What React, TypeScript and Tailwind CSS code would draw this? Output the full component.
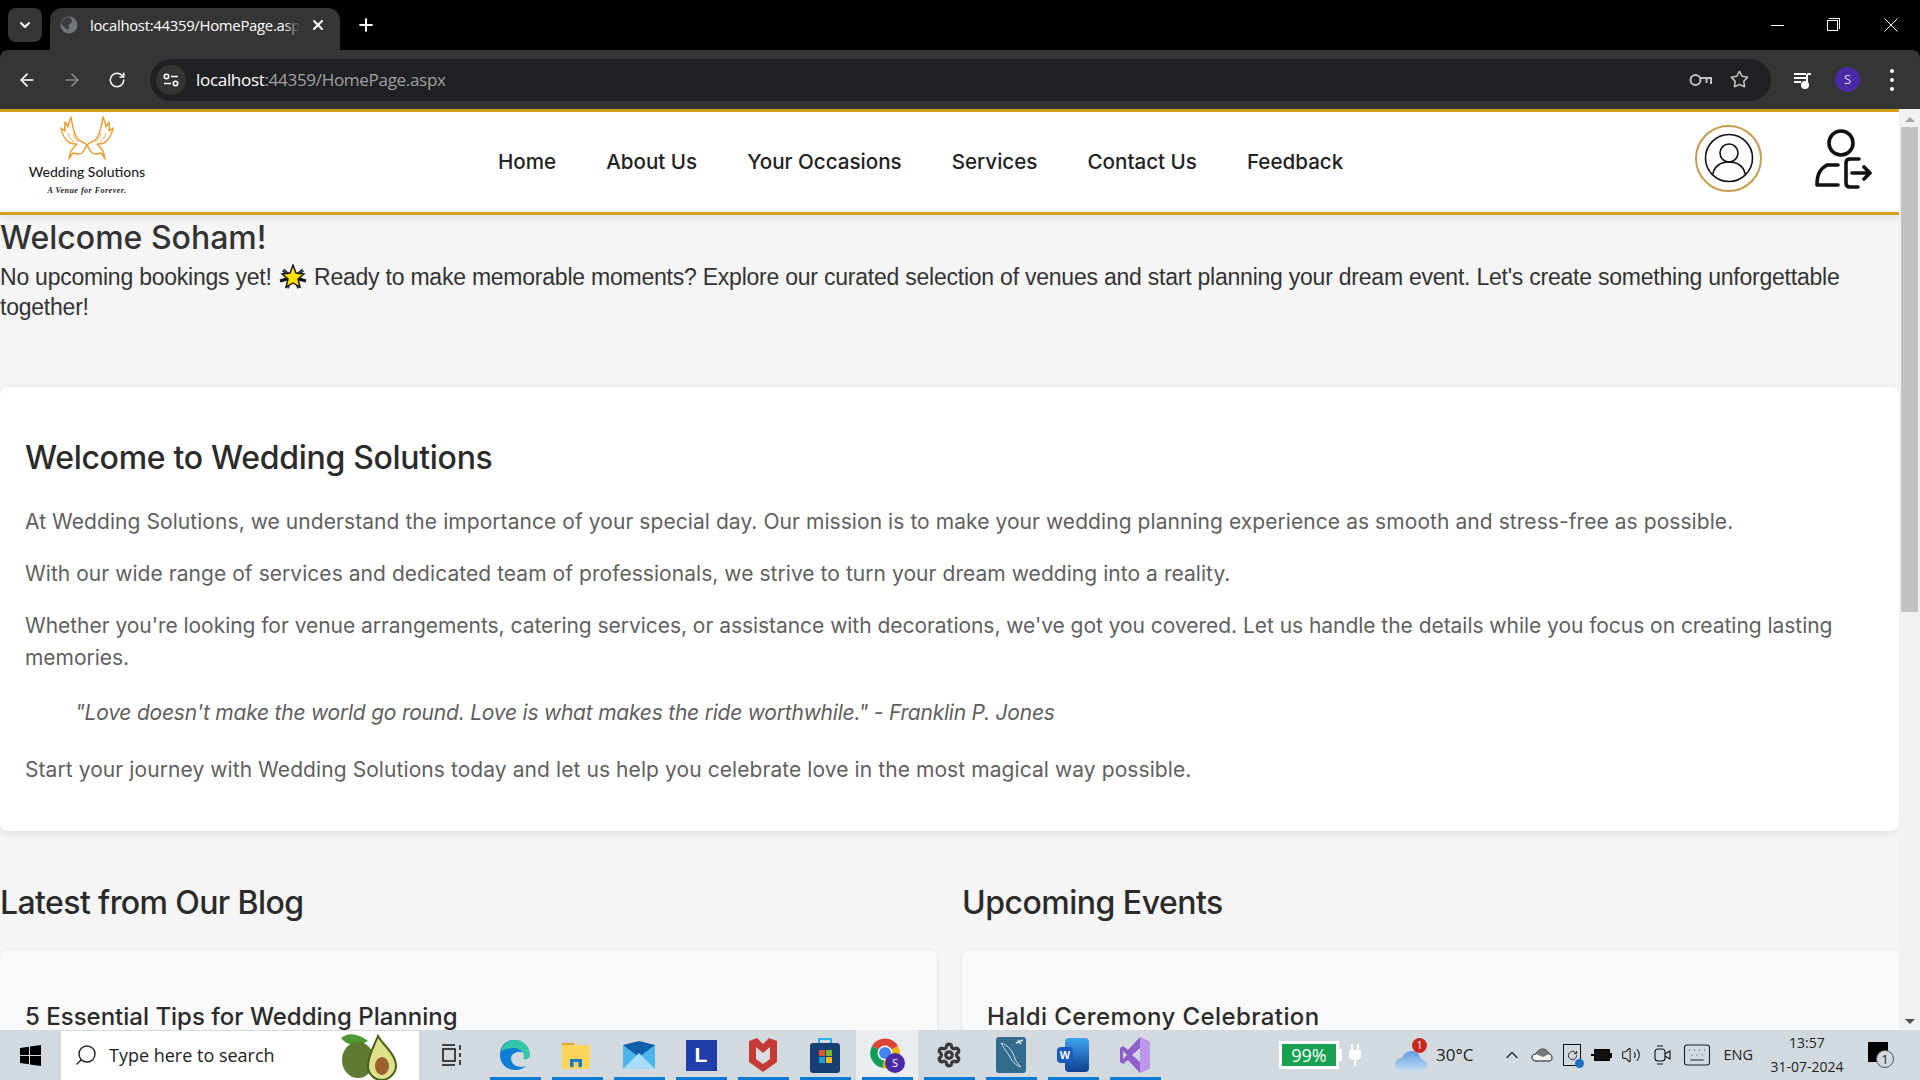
import {
  ArrowLeft,
  ArrowRight,
  RotateCw,
  Star,
  X,
  Plus,
  ChevronDown,
  ChevronUp,
  Search,
  Volume2,
  Settings,
  Keyboard,
} from "lucide-react";

const navLinks = ["Home", "About Us", "Your Occasions", "Services", "Contact Us", "Feedback"];

const columns = [
  {
    heading: "Latest from Our Blog",
    headingClass: "tracking-[-0.6px]",
    title: "5 Essential Tips for Wedding Planning",
    titleClass: "tracking-[0px]",
  },
  {
    heading: "Upcoming Events",
    headingClass: "tracking-[-0.5px]",
    title: "Haldi Ceremony Celebration",
    titleClass: "tracking-[0.4px]",
  },
];

function Dove({ flip }: { flip?: boolean }) {
  return (
    <g transform={flip ? "translate(60 0) scale(-1 1)" : undefined}>
      <path d="M30 29 C27 26 24 26 22 24 C18 21 16 14 14 1 C12 5 11.5 8 11 11 C10 9 9 7 8 6 C7.5 10 7.5 12 8 15 C6.5 14 5.5 13 4 12 C5 18 8 24 13 27 C15 28 18 28 20 28" />
      <path d="M30 29 C28 32 27 35 25 37 C22 39 19 38 16 37 C14 39 13 41 12 43 C13 40 13 37 14 35 C16 32 18 30 20 28" />
      <path d="M16 17 C17 21 19 24 22 26 M11 17 C12 21 14 24 17 26" strokeWidth="0.8" />
    </g>
  );
}

function Logo() {
  return (
    <div className="flex h-[97px] w-[122px] flex-col items-center pt-[2px]">
      <svg width="60" height="46" viewBox="0 0 60 46" fill="none" stroke="#f29b2a" strokeWidth="1.5" strokeLinejoin="round">
        <Dove />
        <Dove flip />
      </svg>
      <div className="mt-[2px] font-['Lato',sans-serif] text-[14px] leading-4 font-medium whitespace-nowrap text-[#1d1d1d]">
        Wedding Solutions
      </div>
      <div className="mt-[6px] font-['Liberation_Serif',serif] text-[8px] leading-[9px] font-bold tracking-[0.5px] whitespace-nowrap text-[#222] italic">
        A Venue for Forever.
      </div>
    </div>
  );
}

function StarEmoji() {
  return (
    <svg width="28" height="26" viewBox="0 0 28 26" className="mx-[1px] inline-block align-[-5px]">
      <path d="M4 6 L10 11 M24 6 L18 11 M1 17 L8 15 M27 17 L20 15 M8 24 L11 18 M20 24 L17 18" stroke="#111" strokeWidth="3" />
      <path d="M4 6 L10 11 M24 6 L18 11 M8 24 L11 18 M20 24 L17 18" stroke="#2aa7d8" strokeWidth="1" />
      <path d="M14 1 L17 9 L25 10 L19 15 L21 23 L14 19 L7 23 L9 15 L3 10 L11 9 Z" fill="#ffdf00" stroke="#111" strokeWidth="1.4" />
    </svg>
  );
}

function Avocado() {
  return (
    <svg width="60" height="50" viewBox="0 0 60 50">
      <path d="M1 8 C8 2 18 3 28 11 C18 17 7 16 1 8 Z" fill="#4d9a34" />
      <ellipse cx="18" cy="30" rx="16" ry="18" fill="#5f7a33" />
      <path d="M38 6 C42 14 56 24 56 36 C56 44 48 50 42 50 C34 50 28 44 28 36 C28 26 34 16 38 6 Z" fill="#dfe08a" stroke="#46621f" strokeWidth="2" />
      <ellipse cx="42" cy="36" rx="7" ry="9" fill="#9c5f2e" />
    </svg>
  );
}

function ChromeIcon() {
  return (
    <div className="relative h-[36px] w-[36px]">
      <svg width="32" height="32" viewBox="0 0 32 32">
        <path d="M16 16 L3 9 A15 15 0 0 1 29 9 Z" fill="#db4437" />
        <path d="M16 16 L3 9 A15 15 0 0 0 14 31 Z" fill="#0f9d58" />
        <path d="M16 16 L29 9 A15 15 0 0 1 14 31 Z" fill="#f4b400" />
        <circle cx="16" cy="16" r="7.5" fill="#fff" />
        <circle cx="16" cy="16" r="6" fill="#4285f4" />
      </svg>
      <div className="absolute right-0 bottom-0 flex h-[20px] w-[20px] items-center justify-center rounded-full bg-[#4b2aa8] font-['Open_Sans',sans-serif] text-[11px] text-white">
        S
      </div>
    </div>
  );
}

function TaskIcon({ children, active }: { children: React.ReactNode; active?: boolean }) {
  return (
    <div className={`flex h-[50px] w-[62px] items-center justify-center ${active ? "bg-[#e9edf0]" : ""}`}>
      <div className="relative flex h-full w-[51px] items-center justify-center">
        {children}
        <div className="absolute bottom-0 left-0 h-[3px] w-full bg-[#0b78d4]" />
      </div>
    </div>
  );
}

export default function App() {
  return (
    <div className="flex h-screen flex-col overflow-hidden bg-black">
      {/* tab strip */}
      <div className="flex h-[50px] items-end font-['Open_Sans',sans-serif] text-white">
        <div className="mb-[8px] ml-[8px] flex h-[34px] w-[34px] items-center justify-center rounded-lg bg-[#353535]">
          <ChevronDown size={16} strokeWidth={3} />
        </div>
        <div className="ml-[8px] flex h-[42px] w-[290px] items-center rounded-t-xl bg-[#353535] pr-[14px] pb-[8px] pl-[10px]">
          <svg width="18" height="18" viewBox="0 0 18 18">
            <circle cx="9" cy="9" r="8.5" fill="#72767b" />
            <path d="M9 1 C12 3 13 5 11 7 C9 8 8 9 9 11 C10 13 7 15 5 12 C4 10 2 9 1 8 C2 4 5 1 9 1 Z" fill="#3a3d40" />
          </svg>
          <div className="relative ml-[12px] w-[210px] overflow-hidden text-[14.9px] tracking-[-0.3px] whitespace-nowrap">
            localhost:44359/HomePage.aspx
            <div className="absolute top-0 right-0 h-full w-[16px] bg-gradient-to-r from-transparent to-[#353535]" />
          </div>
          <X size={16} strokeWidth={3} className="ml-auto" />
        </div>
        <Plus size={20} strokeWidth={2.5} className="mb-[15px] ml-[16px]" />
        <div className="mb-[18px] ml-auto flex items-center gap-[43px] pr-[22px]">
          <div className="h-px w-[13px] bg-white" />
          <div className="relative h-[11px] w-[11px] border border-white">
            <div className="absolute -top-[3px] -right-[3px] h-[11px] w-[11px] border-t border-r border-white" />
          </div>
          <svg width="14" height="14" viewBox="0 0 14 14" stroke="#fff" strokeWidth="1" className="ml-[3px]">
            <path d="M0.5 0.5 L13.5 13.5 M13.5 0.5 L0.5 13.5" />
          </svg>
        </div>
      </div>

      {/* toolbar */}
      <div className="flex h-[59px] items-center rounded-t-lg bg-[#353535] pr-[16px] pl-[17px] text-white">
        <ArrowLeft size={20} />
        <ArrowRight size={20} className="ml-[25px] text-[#8a8a8a]" />
        <RotateCw size={18} className="ml-[26px]" />
        <div className="ml-[24px] flex h-[42px] w-[1621px] items-center rounded-full bg-[#202124] pl-[6px] font-['Open_Sans',sans-serif] text-[17.1px] tracking-[-0.35px]">
          <div className="flex h-[30px] w-[30px] items-center justify-center rounded-full bg-[#353535]">
            <svg width="16" height="14" viewBox="0 0 16 14" fill="none" stroke="#fff" strokeWidth="1.6">
              <circle cx="3.5" cy="3.5" r="2.2" />
              <path d="M8 3.5 H15 M1 10.5 H8" />
              <circle cx="12.5" cy="10.5" r="2.2" />
            </svg>
          </div>
          <span className="ml-[10px]">localhost</span>
          <span className="text-[#a0a0a0]">:44359/HomePage.aspx</span>
          <svg width="24" height="14" viewBox="0 0 24 14" fill="none" stroke="#c2c2c2" strokeWidth="2" className="ml-auto">
            <circle cx="6.5" cy="7" r="5" />
            <path d="M11.5 5 H22 V11 M17.5 6 V10" />
          </svg>
          <Star size={19} className="mr-[22px] ml-[17px] text-[#c2c2c2]" />
        </div>
        <svg width="20" height="20" viewBox="0 0 20 20" className="ml-[22px]" fill="none" stroke="#fff" strokeWidth="2">
          <path d="M1 4 H13 M1 8 H13 M1 12 H8 M14 4 V14 M14 4 H18" />
          <circle cx="12" cy="15" r="3" fill="#fff" />
        </svg>
        <div className="ml-[22px] flex h-[25px] w-[25px] items-center justify-center rounded-full bg-[#4b2aa8] font-['Open_Sans',sans-serif] text-[13px] text-[#ddd]">
          S
        </div>
        <div className="ml-[30px] flex flex-col gap-[5px]">
          <div className="h-[4px] w-[4px] rounded-full bg-white" />
          <div className="h-[4px] w-[4px] rounded-full bg-white" />
          <div className="h-[4px] w-[4px] rounded-full bg-white" />
        </div>
      </div>

      {/* page + scrollbar */}
      <div className="flex min-h-0 flex-1">
        <div className="min-w-0 flex-1 overflow-hidden bg-[#f5f5f5]">
          <nav className="flex h-[106px] items-center border-y-[3px] border-[#d69e1e] bg-white shadow-[0_2px_8px_rgba(0,0,0,0.1)]">
            <div className="ml-[26px]">
              <Logo />
            </div>
            <ul className="ml-[350px] flex gap-[50px] font-['Inter',sans-serif] text-[20.6px] font-medium text-[#222]">
              {navLinks.map((link) => (
                <li key={link}>{link}</li>
              ))}
            </ul>
            <div className="ml-auto flex items-start">
              <div className="-mt-[8px] flex h-[67px] w-[67px] items-center justify-center rounded-full border-2 border-[#c99b4f]">
                <svg width="50" height="50" viewBox="0 0 50 50" fill="none" stroke="#111" strokeWidth="1.6">
                  <circle cx="25" cy="25" r="23.5" />
                  <circle cx="25" cy="20" r="9" />
                  <path d="M9 41 C10 33 17 29 25 29 C33 29 40 33 41 41" />
                </svg>
              </div>
              <svg width="58" height="60" viewBox="0 0 58 60" fill="none" stroke="#111" strokeWidth="3.6" strokeLinecap="round" strokeLinejoin="round" className="mt-[-4px] mr-[27px] ml-[52px]">
                <circle cx="27" cy="14" r="12" />
                <path d="M24 36 L13 36 C6 40 3 45 3 56 L24 56" />
                <path d="M45 30 L36 30 C33 30 32 32 32 34 L32 54 C32 56 33 58 36 58 L44 58" />
                <path d="M38 44 L56 44 M50 38 L56 44 L50 50" />
              </svg>
            </div>
          </nav>

          <h2 className="mt-[4px] font-['Inter',sans-serif] text-[32px] leading-[37px] font-medium tracking-[0px] text-[#333]">
            Welcome Soham!
          </h2>
          <p className="mt-[6px] h-[99px] font-['Liberation_Sans',sans-serif] text-[23px] leading-[30px] tracking-[-0.23px] text-[#333]">
            No upcoming bookings yet! <StarEmoji /> Ready to make memorable moments? Explore our curated selection of venues and start planning your dream event. Let's create something unforgettable together!
          </p>

          <section className="mt-[26px] h-[444px] rounded-lg bg-white px-[25px] pt-[49px] font-['Inter',sans-serif] text-[21px] leading-[32px] text-[#5f5f5f] shadow-[0_2px_10px_rgba(0,0,0,0.1)]">
            <h3 className="text-[32px] leading-[44px] font-medium tracking-[-0.3px] text-[#2b2b2b]">
              Welcome to Wedding Solutions
            </h3>
            <p className="mt-[26px] tracking-[0.065px]">
              At Wedding Solutions, we understand the importance of your special day. Our mission is to make your wedding planning experience as smooth and stress-free as possible.
            </p>
            <p className="mt-[20px] tracking-[0.05px]">
              With our wide range of services and dedicated team of professionals, we strive to turn your dream wedding into a reality.
            </p>
            <p className="mt-[20px] tracking-[-0.04px]">
              Whether you're looking for venue arrangements, catering services, or assistance with decorations, we've got you covered. Let us handle the details while you focus on creating lasting memories.
            </p>
            <p className="mt-[23px] pl-[50px] tracking-[-0.22px] italic">
              "Love doesn't make the world go round. Love is what makes the ride worthwhile." - Franklin P. Jones
            </p>
            <p className="mt-[25px] tracking-[0.08px]">
              Start your journey with Wedding Solutions today and let us help you celebrate love in the most magical way possible.
            </p>
          </section>

          <div className="mt-[50px] grid grid-cols-2 gap-[25px] font-['Inter',sans-serif] text-[#2b2b2b]">
            {columns.map((col) => (
              <div key={col.heading}>
                <h3 className={`text-[32px] leading-[44px] font-medium ${col.headingClass}`}>{col.heading}</h3>
                <div className="mt-[25px] h-[200px] rounded-lg bg-[#f9f9f9] px-[25px] pt-[51px] shadow-[0_1px_4px_rgba(0,0,0,0.08)]">
                  <h4 className={`text-[24px] leading-[32px] font-medium ${col.titleClass}`}>{col.title}</h4>
                </div>
              </div>
            ))}
          </div>
        </div>

        {/* scrollbar */}
        <div className="flex w-[21px] flex-col items-center bg-[#f1f1f1] pt-[8px]">
          <div className="h-0 w-0 border-x-[5px] border-b-[5px] border-x-transparent border-b-[#a3a3a3]" />
          <div className="mt-[5px] h-[485px] w-[17px] bg-[#c1c1c1]" />
          <div className="mt-auto mb-[6px] h-0 w-0 border-x-[5px] border-t-[5px] border-x-transparent border-t-[#505050]" />
        </div>
      </div>

      {/* taskbar */}
      <div className="flex h-[50px] items-center bg-[#d2dae0] font-['Open_Sans',sans-serif] text-[#222]">
        <div className="flex w-[61px] justify-center">
          <svg width="21" height="21" viewBox="0 0 21 21" fill="#000">
            <path d="M0 3 L9 1.7 V10 H0 Z M10 1.5 L21 0 V10 H10 Z M0 11 H9 V19.3 L0 18 Z M10 11 H21 V21 L10 19.5 Z" />
          </svg>
        </div>
        <div className="flex h-[49px] w-[358px] items-center bg-white pl-[13px] text-[18px]">
          <Search size={24} strokeWidth={1.4} className="-scale-x-100 text-[#222]" />
          <span className="ml-[11px]">Type here to search</span>
          <div className="mr-[19px] ml-auto">
            <Avocado />
          </div>
        </div>
        <div className="flex w-[65px] justify-center">
          <svg width="20" height="22" viewBox="0 0 20 22" fill="none" stroke="#111" strokeWidth="1.5">
            <path d="M0 1 H13 M0 21 H13 M1 5 H13 V17 H1 Z M18 1 V6 M18 9 V13 M18 16 V21" />
          </svg>
        </div>
        <TaskIcon>
          <svg width="32" height="32" viewBox="0 0 32 32">
            <path d="M30 18 C30 8 24 1 15 1 C7 1 1 7 1 16 C1 25 8 31 16 31 C21 31 25 29 27 27 C22 29 13 28 12 20 C12 15 16 13 20 13 C25 13 30 15 30 18 Z" fill="#0c7ed6" />
            <path d="M2 12 C4 5 10 1 16 1 C25 1 31 8 31 16 C31 20 27 21 24 20 C27 15 22 9 15 9 C9 9 4 11 2 12 Z" fill="#35c7a5" />
          </svg>
        </TaskIcon>
        <TaskIcon>
          <svg width="30" height="28" viewBox="0 0 30 28">
            <path d="M0 2 H12 L14 6 H0 Z" fill="#e0a52a" />
            <rect y="4" width="28" height="24" rx="1" fill="#fbd55c" />
            <path d="M8 26 V18 H20 V26 H16.5 V21 H11.5 V26 Z" fill="#1c78c8" />
          </svg>
        </TaskIcon>
        <TaskIcon>
          <svg width="32" height="28" viewBox="0 0 32 28">
            <rect y="4" width="32" height="24" fill="#4db5ee" />
            <path d="M0 4 L16 0 L32 4 L16 16 Z" fill="#0f5ea8" />
            <path d="M0 28 L16 12 L32 28 Z" fill="#a6ddf8" />
          </svg>
        </TaskIcon>
        <TaskIcon>
          <div className="flex h-[31px] w-[31px] items-center justify-center bg-[#1f3eaa] font-['Liberation_Sans',sans-serif] text-[21px] font-bold text-white">
            L
          </div>
        </TaskIcon>
        <TaskIcon>
          <svg width="28" height="34" viewBox="0 0 28 34">
            <path d="M0 3 L8 0 L14 6 L20 0 L28 3 V24 L14 34 L0 24 Z" fill="#c63a36" />
            <path d="M7 9 L14 15 L21 9 V21 L14 26 L7 21 Z" fill="#d8dde1" />
          </svg>
        </TaskIcon>
        <TaskIcon>
          <svg width="30" height="36" viewBox="0 0 30 36">
            <path d="M9 7 V2 H21 V7" fill="none" stroke="#28b4e8" strokeWidth="2" />
            <rect y="6" width="30" height="30" rx="3" fill="#173f72" />
            <rect x="9" y="13" width="6" height="6" fill="#e8502a" />
            <rect x="16" y="13" width="6" height="6" fill="#74b72b" />
            <rect x="9" y="20" width="6" height="6" fill="#1f9be0" />
            <rect x="16" y="20" width="6" height="6" fill="#f7b614" />
          </svg>
        </TaskIcon>
        <TaskIcon active>
          <ChromeIcon />
        </TaskIcon>
        <TaskIcon>
          <Settings size={26} strokeWidth={3} className="text-[#3a3a3a]" />
        </TaskIcon>
        <TaskIcon>
          <svg width="30" height="36" viewBox="0 0 30 36">
            <rect width="30" height="36" rx="3" fill="#336b8f" />
            <path d="M5 6 C12 8 17 14 19 22 C21 26 23 28 25 30 C19 28 16 24 14 20 C12 16 8 12 5 6 Z" fill="none" stroke="#cfe0ea" strokeWidth="1" />
            <path d="M20 6 L27 3 M22 3 L25 7" stroke="#dbe7ee" strokeWidth="1.4" />
          </svg>
        </TaskIcon>
        <TaskIcon>
          <div className="relative h-[34px] w-[32px]">
            <div className="absolute top-0 right-0 h-full w-[24px] rounded-sm bg-gradient-to-b from-[#41a5ee] to-[#103f91]" />
            <div className="absolute top-[9px] left-0 flex h-[16px] w-[16px] items-center justify-center rounded-sm bg-[#185abd] font-['Liberation_Sans',sans-serif] text-[11px] font-bold text-white">
              W
            </div>
          </div>
        </TaskIcon>
        <TaskIcon>
          <svg width="30" height="36" viewBox="0 0 30 36">
            <path d="M20 0 L30 5 V31 L20 36 L8 23 L3 27 L0 25 V11 L3 9 L8 13 Z" fill="#8f5fc9" />
            <path d="M20 0 L30 5 V31 L20 36 Z" fill="#bd97ec" />
            <path d="M20 11 V25 L12 18 Z M3 14 V22 L7 18 Z" fill="#d1d8df" />
          </svg>
        </TaskIcon>

        <div className="ml-[113px] flex items-center">
          <div className="flex h-[28px] w-[60px] items-center justify-center border-[3px] border-white bg-[#16a04f] text-[18px] leading-none text-white">
            99%
          </div>
          <div className="h-[12px] w-[3px] bg-white" />
        </div>
        <svg width="14" height="22" viewBox="0 0 14 22" fill="#fff" className="ml-[6px]">
          <path d="M3 0 V6 H1 V12 C1 15 4 16 6 16 V22 H8 V16 C10 16 13 15 13 12 V6 H11 V0 H9 V6 H5 V0 Z" />
        </svg>
        <div className="relative ml-[33px] h-[32px] w-[32px]">
          <svg width="32" height="24" viewBox="0 0 32 24" className="absolute bottom-0">
            <defs>
              <linearGradient id="cloudFill" x1="0" y1="0" x2="0" y2="1">
                <stop offset="0" stopColor="#5e9be0" />
                <stop offset="1" stopColor="#c4dcf4" />
              </linearGradient>
            </defs>
            <path d="M8 24 C3 24 0 21 0 17 C0 13 4 11 7 11 C9 6 13 4 17 4 C22 4 25 8 26 12 C30 13 32 16 32 18 C32 22 29 24 26 24 Z" fill="url(#cloudFill)" />
          </svg>
          <div className="absolute -top-[1px] right-0 flex h-[15px] w-[15px] items-center justify-center rounded-full bg-[#c62a1e] text-[10px] text-white">
            1
          </div>
        </div>
        <span className="ml-[9px] text-[17px]">30°C</span>
        <ChevronUp size={20} strokeWidth={1.5} className="ml-[29px]" />
        <svg width="22" height="14" viewBox="0 0 22 14" stroke="#111" className="ml-[9px]">
          <path d="M5 13 C2 13 1 11 1 9 C1 7 3 6 5 6 C6 3 9 1 12 1 C15 1 17 3 18 6 C20 6 21 8 21 10 C21 12 20 13 18 13 Z" fill="#f2f4f5" />
          <path d="M5 6 C6 3 9 1 12 1 C15 1 17 3 18 6 L12 9 Z" fill="#777" stroke="none" />
        </svg>
        <div className="relative ml-[10px] flex h-[22px] w-[18px] items-center justify-center border border-[#111]">
          <RotateCw size={11} />
          <div className="absolute -right-[4px] -bottom-[3px] h-[9px] w-[9px] rounded-full bg-[#1e6fc4]" />
        </div>
        <div className="ml-[10px] flex items-center">
          <div className="h-[2px] w-[3px] bg-black" />
          <div className="h-[12px] w-[16px] border border-black bg-[#111]" />
          <div className="h-[5px] w-[2px] bg-black" />
        </div>
        <Volume2 size={20} strokeWidth={1.3} className="ml-[9px]" />
        <svg width="18" height="20" viewBox="0 0 18 20" fill="none" stroke="#111" strokeWidth="1.1" className="ml-[13px]">
          <rect x="1" y="4" width="10" height="12" rx="3" />
          <path d="M11 9 L16 6 V14 L11 11 M3 1 H9 M3 19 H9" />
        </svg>
        <Keyboard size={30} strokeWidth={0.9} className="ml-[10px]" />
        <span className="ml-[11px] text-[14.5px]">ENG</span>
        <div className="ml-[13px] w-[82px] text-center text-[14px] leading-[24px]">
          <div>13:57</div>
          <div>31-07-2024</div>
        </div>
        <div className="relative ml-[20px] h-[26px] w-[26px]">
          <div className="h-[20px] w-[20px] bg-black" />
          <div className="absolute right-0 bottom-0 flex h-[18px] w-[18px] items-center justify-center rounded-full border border-[#555] bg-[#d2dae0] text-[13px] leading-none">
            1
          </div>
        </div>
      </div>
    </div>
  );
}
